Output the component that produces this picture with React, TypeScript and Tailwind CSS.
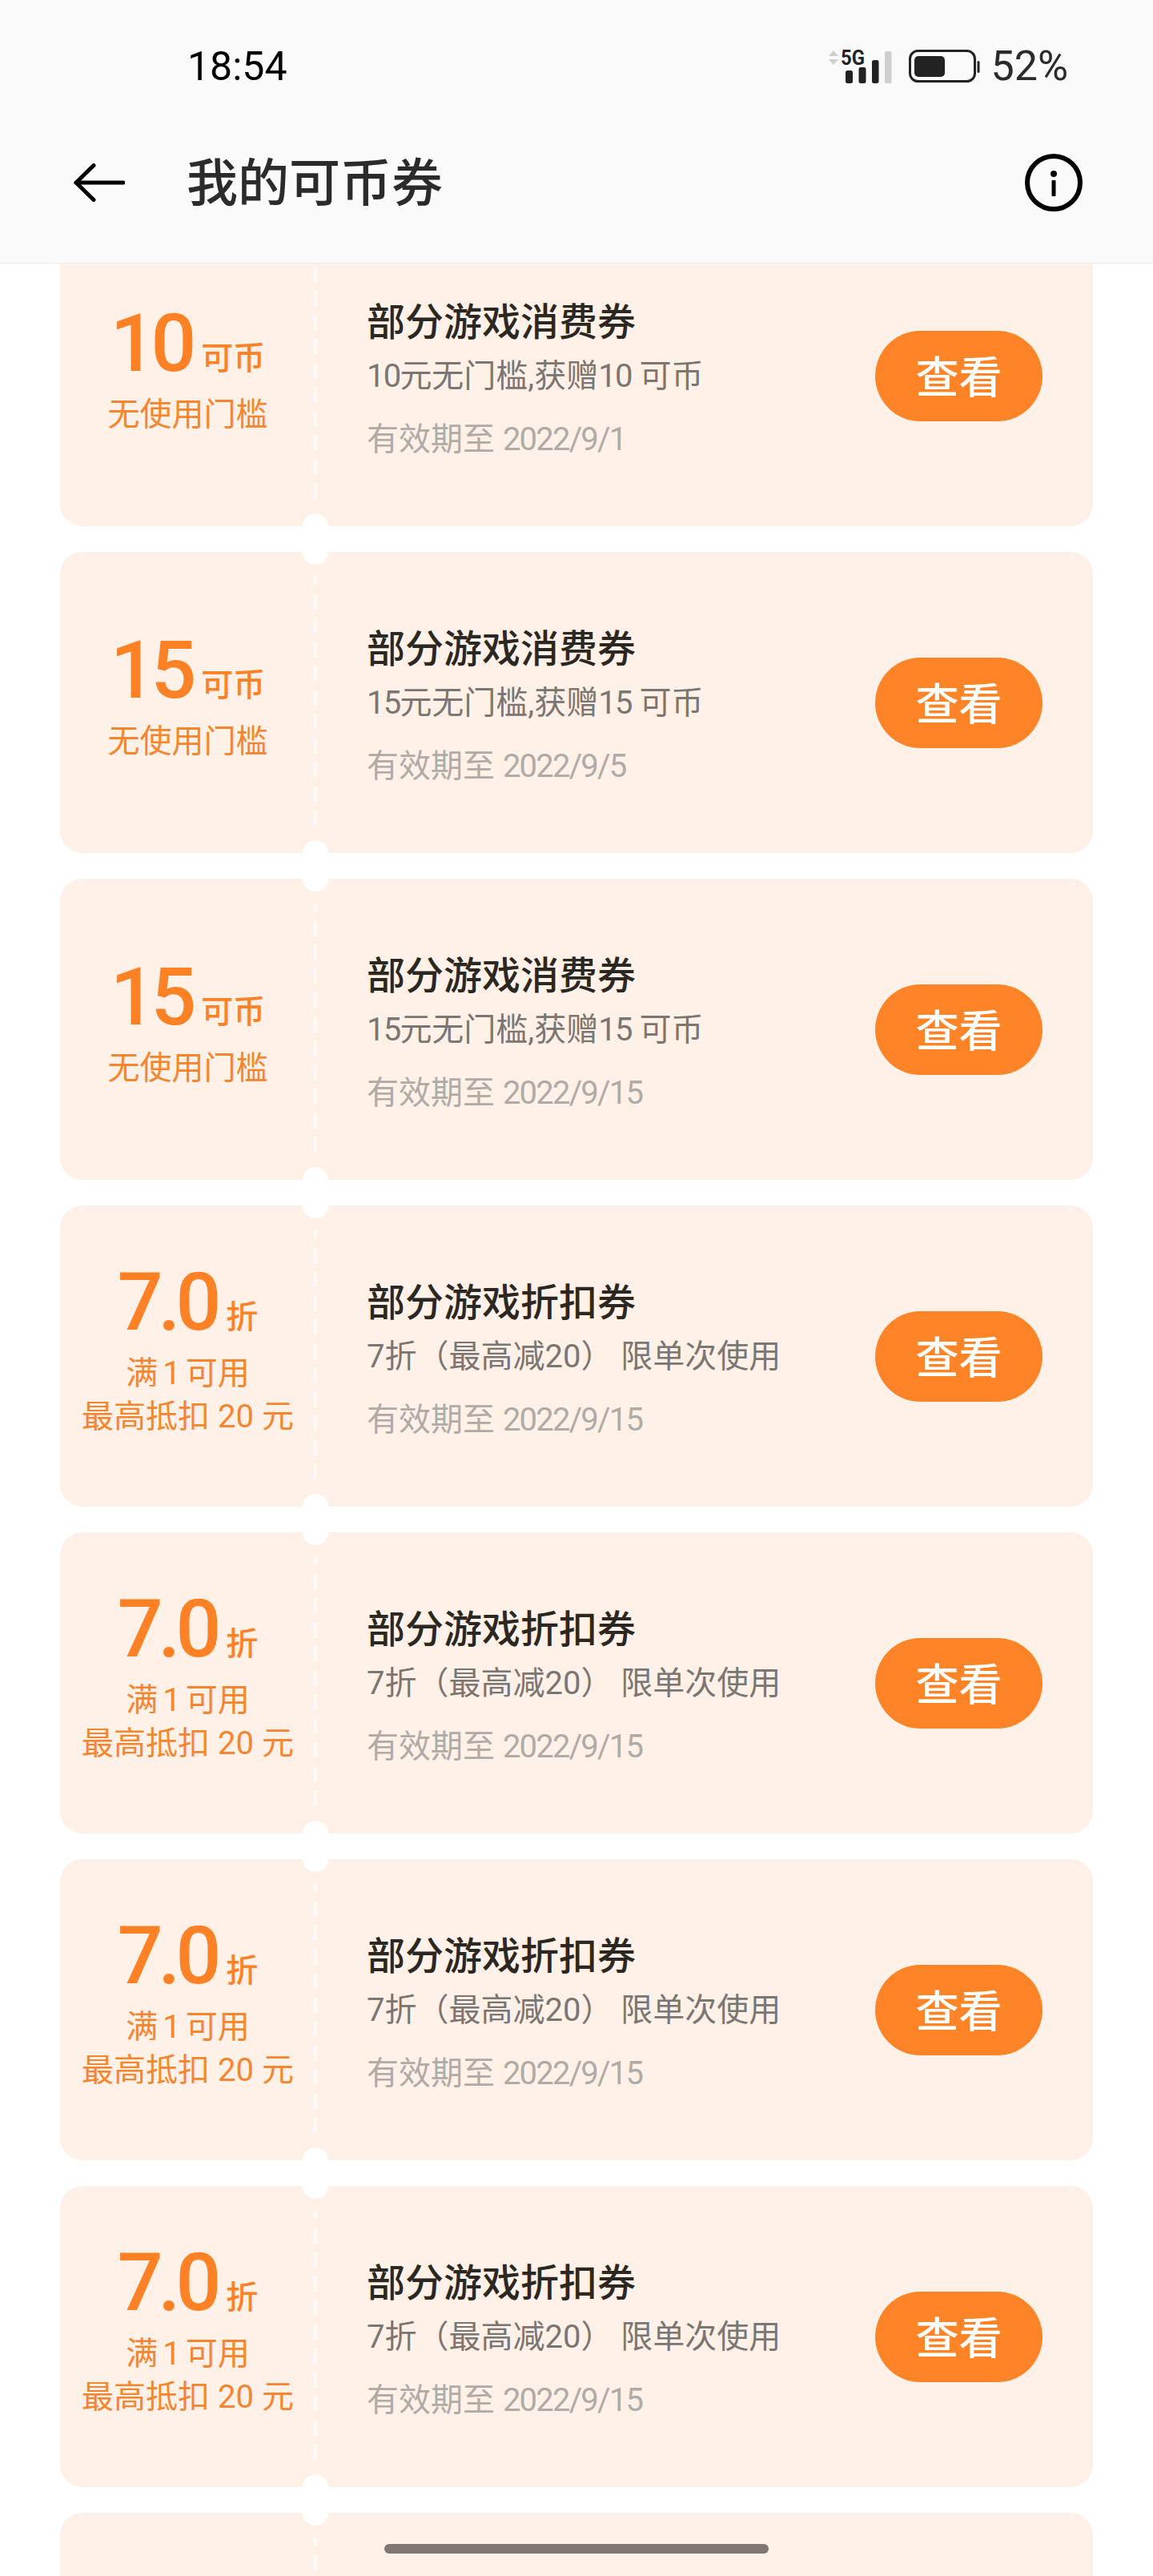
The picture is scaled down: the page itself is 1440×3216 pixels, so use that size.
const CJK = "font-['Roboto','Noto_Sans_CJK_SC',sans-serif]";

type Coupon = { value: string; unit: string; lines: string[]; title: string; desc: string; date: string };

const spend = (value: string, date: string): Coupon => ({
  value,
  unit: "可币",
  lines: ["无使用门槛"],
  title: "部分游戏消费券",
  desc: `${value}元无门槛,获赠${value} 可币`,
  date,
});

const discount = (): Coupon => ({
  value: "7.0",
  unit: "折",
  lines: ["满 1 可用", "最高抵扣 20 元"],
  title: "部分游戏折扣券",
  desc: "7折（最高减20） 限单次使用",
  date: "2022/9/15",
});

const coupons: Coupon[] = [
  spend("10", "2022/9/1"),
  spend("15", "2022/9/5"),
  spend("15", "2022/9/15"),
  discount(),
  discount(),
  discount(),
  discount(),
];

function Narrow({ text }: { text: string }) {
  return (
    <>
      {text.split(/([0-9/]+)/).map((part, i) =>
        /[0-9]/.test(part) ? (
          <span key={i} className="tracking-[-1.8px]">
            {part}
          </span>
        ) : (
          <span key={i}>{part}</span>
        )
      )}
    </>
  );
}

function BackIcon() {
  return (
    <svg width="64" height="48" viewBox="0 0 64 48" fill="none" stroke="#000" strokeWidth="5" strokeLinecap="round" strokeLinejoin="round">
      <path d="M3 24H62" />
      <path d="M25 2.5L3 24L25 45.5" />
    </svg>
  );
}

function InfoIcon() {
  return (
    <svg width="72" height="72" viewBox="0 0 72 72" fill="none">
      <circle cx="36" cy="36" r="33" stroke="#000" strokeWidth="6" />
      <circle cx="36" cy="25" r="4" fill="#000" />
      <rect x="33.5" y="33" width="5" height="20" rx="1" fill="#000" />
    </svg>
  );
}

function SignalIcon() {
  return (
    <svg width="82" height="48" viewBox="0 0 82 48" fill="none" className="overflow-visible">
      <path d="M2 11L8 4L14 11Z" fill="#cfcfcf" />
      <path d="M2 15L14 15L8 22Z" fill="#cfcfcf" />
      <text x="17" y="22" fontFamily="Roboto, sans-serif" fontWeight="700" fontSize="26" fill="#222" textLength="30" lengthAdjust="spacingAndGlyphs">5G</text>
      <rect x="23" y="29" width="9" height="16" rx="2.5" fill="#222" />
      <rect x="39.5" y="25" width="9" height="20" rx="2.5" fill="#222" />
      <rect x="56" y="16" width="8.5" height="29" rx="2.5" fill="#222" />
      <rect x="72" y="5" width="8.5" height="40" rx="1.5" fill="#cfcfcf" />
    </svg>
  );
}

function BatteryIcon() {
  return (
    <svg width="90" height="42" viewBox="0 0 90 42" fill="none">
      <rect x="1.5" y="1.5" width="81" height="38" rx="10" stroke="#222" strokeWidth="3" />
      <rect x="7" y="8" width="38" height="26" rx="5" fill="#222" />
      <rect x="85.5" y="14" width="3" height="15" rx="1.5" fill="#222" />
    </svg>
  );
}

function CouponCard({ c }: { c?: Coupon }) {
  return (
    <div className="relative flex h-[376px] rounded-[28px] bg-[#fff1e7]">
      <div className="absolute left-[303px] top-[-16px] h-8 w-8 rounded-full bg-white" />
      <div className="absolute bottom-[-16px] left-[303px] h-8 w-8 rounded-full bg-white" />
      <div className="absolute bottom-[33px] left-[317px] top-[31px] w-[4px] bg-[linear-gradient(to_bottom,#fffaf7_0,#fffaf7_20px,transparent_20px)] bg-[length:4px_30px] bg-[position:0_-9px]" />
      {c && (
        <>
          <div className="flex w-[319px] flex-col items-center justify-center pb-[18px]">
            <div className="flex items-baseline text-[#ff8126]">
              <span className="text-[100px] font-medium leading-[108px] tracking-[-6px]">{c.value}</span>
              <span className="ml-[12px] -translate-y-[2px] text-[40px] font-medium leading-[40px]">{c.unit}</span>
            </div>
            <div className="mt-[8px] flex flex-col items-center text-[40px] leading-[54px] text-[#f5862f]">
              {c.lines.map((l) => (
                <span key={l} className={l.startsWith("满") ? "[word-spacing:-4px]" : ""}>
                  {l}
                </span>
              ))}
            </div>
          </div>
          <div className="flex flex-1 items-center justify-between pl-[64px] pr-[63px]">
            <div className="flex flex-col pt-[12px]">
              <span className="text-[48px] font-medium leading-[60px] text-[#2b2723]">{c.title}</span>
              <span className="mt-[9px] text-[40px] leading-[56px] text-[#7b7672]">
                {c.unit === "折" ? c.desc : <Narrow text={c.desc} />}
              </span>
              <span className="mt-[23px] text-[40px] leading-[56px] text-[#b0aba6]">
                <Narrow text={`有效期至 ${c.date}`} />
              </span>
            </div>
            <div className="flex h-[113px] w-[209px] items-center justify-center rounded-full bg-[#ff8427] pt-[7px] text-[54px] font-medium text-white">
              查看
            </div>
          </div>
        </>
      )}
    </div>
  );
}

export default function App() {
  return (
    <div className={`relative flex h-[3216px] w-[1440px] flex-col overflow-hidden bg-white ${CJK}`}>
      <header className="flex h-[329px] shrink-0 flex-col border-b border-[#ebebeb] bg-[#fafafa]">
        <div className="flex h-[166px] items-center pl-[234px] pr-[106px]">
          <span className="text-[50px] leading-none text-black">18:54</span>
          <div className="ml-auto flex items-center">
            <SignalIcon />
            <div className="ml-[20px]">
              <BatteryIcon />
            </div>
            <span className="ml-[12px] text-[52px] leading-none text-[#2b2b2b]">52%</span>
          </div>
        </div>
        <div className="flex h-[124px] items-center pl-[92px] pr-[88px]">
          <BackIcon />
          <span className="ml-[77px] mt-[3px] text-[64px] font-medium leading-none text-[#2b2b2b]">我的可币券</span>
          <div className="ml-auto">
            <InfoIcon />
          </div>
        </div>
      </header>
      <main className="min-h-0 flex-1 overflow-hidden px-[75px]">
        <div className="mt-[-48px] flex flex-col gap-8">
          {coupons.map((c, i) => (
            <CouponCard key={i} c={c} />
          ))}
          <CouponCard />
        </div>
      </main>
      <div className="absolute bottom-[28px] left-[480px] h-[12px] w-[480px] rounded-full bg-[#7f7873]" />
    </div>
  );
}
